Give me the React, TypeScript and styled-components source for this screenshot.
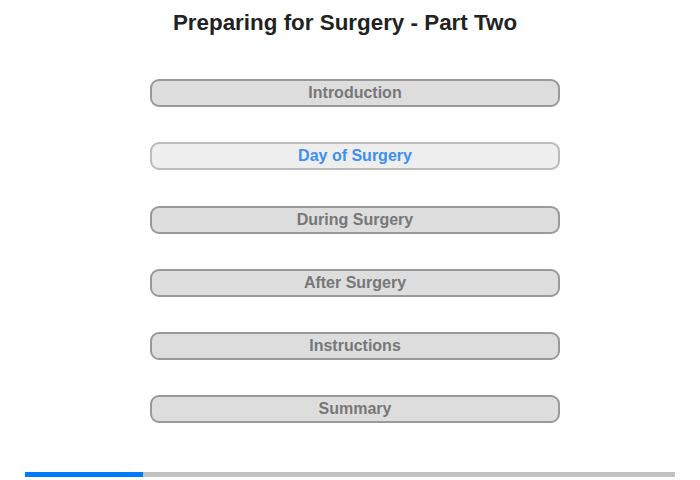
import React from "react";
import styled, { createGlobalStyle } from "styled-components";

const GlobalStyle = createGlobalStyle`
  body {
    margin: 0;
    background: #ffffff;
    font-family: "Liberation Sans", Arial, sans-serif;
  }
`;

const Page = styled.div`
  width: 700px;
  height: 480px;
  display: flex;
  flex-direction: column;
`;

const Title = styled.h1`
  margin: 10px 0 0 0;
  padding-right: 10px;
  font-size: 22.4px;
  line-height: 26px;
  font-weight: bold;
  color: #222222;
  text-align: center;
`;

const Menu = styled.div`
  display: flex;
  flex-direction: column;
  gap: 35.25px;
  margin: 43px 0 0 150px;
  width: 410px;
`;

const MenuButton = styled.div<{ $active?: boolean }>`
  box-sizing: border-box;
  height: 28px;
  border-radius: 9px;
  border: 2px solid ${(p) => (p.$active ? "#bbbbbb" : "#999999")};
  background: ${(p) => (p.$active ? "#eeeeee" : "#dddddd")};
  color: ${(p) => (p.$active ? "#3d8ff0" : "#777777")};
  font-size: 16px;
  font-weight: bold;
  line-height: 24px;
  text-align: center;
  cursor: pointer;
`;

const Track = styled.div`
  margin: auto 25px 3px 25px;
  height: 5px;
  background: #c2c2c2;
  display: flex;
`;

const Fill = styled.div`
  height: 100%;
  background: #007bff;
`;

const sections = [
  "Introduction",
  "Day of Surgery",
  "During Surgery",
  "After Surgery",
  "Instructions",
  "Summary",
];

const App: React.FC = () => {
  const active = 1;
  const progress = 118 / 650;
  return (
    <>
      <GlobalStyle />
      <Page>
        <Title>Preparing for Surgery - Part Two</Title>
        <Menu>
          {sections.map((s, i) => (
            <MenuButton key={s} $active={i === active}>
              {s}
            </MenuButton>
          ))}
        </Menu>
        <Track>
          <Fill style={{ width: `${progress * 100}%` }} />
        </Track>
      </Page>
    </>
  );
};

export default App;
